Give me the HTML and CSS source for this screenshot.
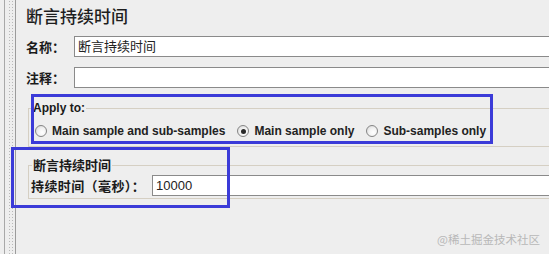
FILE: index.html
```html
<!DOCTYPE html>
<html lang="zh">
<head>
<meta charset="utf-8">
<title>断言持续时间</title>
<link rel="stylesheet" href="styles.css">
</head>
<body>
<div class="frame">
  <div class="gutter"></div>
  <main class="panel">
    <h1 class="title">断言持续时间</h1>
    <div class="field-row">
      <span class="field-label">名称：</span>
      <div class="text-input">断言持续时间</div>
    </div>
    <div class="field-row gap">
      <span class="field-label">注释：</span>
      <div class="text-input"></div>
    </div>
    <fieldset class="group apply">
      <legend class="legend-en">Apply to:</legend>
      <div class="radio-row">
        <label class="radio-item"><span class="radio"></span>Main sample and sub-samples</label>
        <label class="radio-item"><span class="radio checked"></span>Main sample only</label>
        <label class="radio-item"><span class="radio"></span>Sub-samples only</label>
      </div>
    </fieldset>
    <fieldset class="group duration">
      <legend class="legend-cn">断言持续时间</legend>
      <div class="duration-row">
        <span class="duration-label">持续时间（毫秒）：</span>
        <div class="text-input">10000</div>
      </div>
    </fieldset>
  </main>
</div>
<div class="mark mark-apply"></div>
<div class="mark mark-duration"></div>
<div class="watermark">@稀土掘金技术社区</div>
</body>
</html>
```
FILE: styles.css
```css
html, body {
  margin: 0;
  padding: 0;
}
body {
  position: relative;
  width: 549px;
  height: 254px;
  overflow: hidden;
  background: #eeeeee;
  color: #1f1f1f;
  font-family: "Liberation Sans", "Noto Sans CJK SC", sans-serif;
}
.frame {
  display: flex;
  height: 254px;
}
.gutter {
  flex: none;
  width: 7px;
  margin-left: 4px;
  padding-left: 3px;
  border-left: 1px solid #a8a8a8;
  border-right: 1px solid #9c9c9c;
  background-image: radial-gradient(circle, #b9b9b9 0.7px, transparent 0.9px);
  background-size: 3px 3px;
  background-origin: content-box;
  background-clip: content-box;
}
.panel {
  flex: 1;
  min-width: 0;
  padding: 4px 0 0 10px;
  overflow: hidden;
}
.title {
  margin: 0;
  font: 500 17px/24px "Noto Sans CJK SC", sans-serif;
  color: #1e1e1e;
}
.field-row {
  display: flex;
  align-items: center;
  height: 21px;
  margin-top: 8px;
}
.field-row.gap {
  margin-top: 10px;
}
.field-label {
  flex: none;
  width: 48px;
  font: 700 13px/21px "Noto Sans CJK SC", sans-serif;
  color: #1a1a1a;
}
.text-input {
  flex: 1;
  box-sizing: border-box;
  height: 21px;
  margin-right: -6px;
  padding-left: 3px;
  background: #ffffff;
  border: 1px solid #8a8a8a;
  border-right: none;
  font: 400 13px/19px "Liberation Sans", "Noto Sans CJK SC", sans-serif;
  color: #222222;
}
.group {
  margin: 0 -8px 0 2px;
  border: 1px solid #d5cfc3;
  padding: 0 0 0 3px;
  min-width: 0;
}
.group legend {
  padding: 0 1px;
  color: #1a1a1a;
}
.apply {
  margin-top: 13px;
  padding-bottom: 6px;
}
.legend-en {
  font: 700 12px/14px "Liberation Sans", sans-serif;
}
.radio-row {
  display: flex;
  align-items: center;
  gap: 12px;
  height: 18px;
  margin-top: 7px;
  padding-left: 3px;
}
.radio-item {
  display: flex;
  align-items: center;
  gap: 5px;
  font: 700 12px/18px "Liberation Sans", sans-serif;
  color: #222222;
  white-space: nowrap;
}
.radio {
  position: relative;
  flex: none;
  box-sizing: border-box;
  width: 12px;
  height: 12px;
  border: 1px solid #858585;
  border-radius: 50%;
  background: radial-gradient(circle at 62% 65%, #ffffff 0%, #f2f2f2 45%, #d2d2d2 100%);
}
.radio.checked::after {
  content: "";
  position: absolute;
  left: 2.5px;
  top: 2.5px;
  width: 5px;
  height: 5px;
  border-radius: 50%;
  background: #2a2a2a;
}
.duration {
  margin-top: 11px;
  padding-bottom: 2px;
}
.legend-cn {
  font: 700 13px/14px "Noto Sans CJK SC", sans-serif;
}
.duration-row {
  display: flex;
  align-items: center;
  height: 21px;
  margin-top: 3px;
}
.duration-label {
  flex: none;
  width: 121px;
  margin-left: -1px;
  font: 700 13px/21px "Noto Sans CJK SC", sans-serif;
  letter-spacing: 0.4px;
  color: #1a1a1a;
  white-space: nowrap;
}
.mark {
  position: absolute;
  box-sizing: border-box;
  border: 3px solid #3b3bd8;
}
.mark-apply {
  left: 31px;
  top: 94px;
  width: 462px;
  height: 50px;
}
.mark-duration {
  left: 11px;
  top: 147px;
  width: 219px;
  height: 61px;
}
.watermark {
  position: absolute;
  right: 9px;
  top: 231px;
  font: 400 11.5px/16px "Noto Sans CJK SC", sans-serif;
  color: #b8b8b8;
}
```
